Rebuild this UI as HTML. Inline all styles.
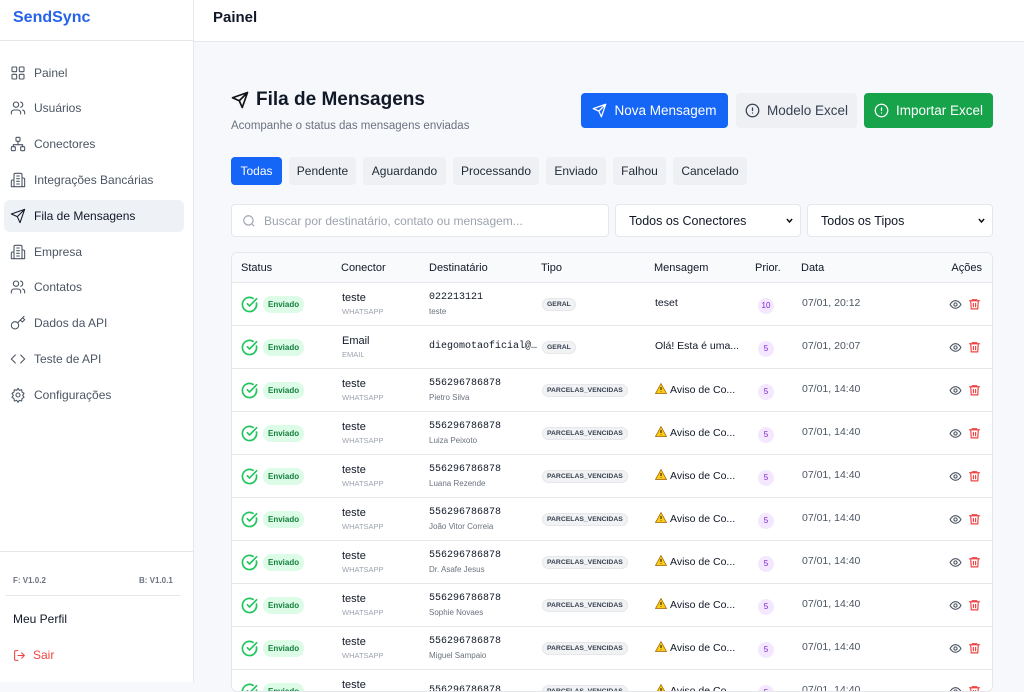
<!DOCTYPE html>
<html><head><meta charset="utf-8"><style>
*{box-sizing:border-box;margin:0;padding:0}
body{width:1024px;height:682px;overflow:hidden;font-family:"Liberation Sans",sans-serif;background:#f6f8fb;position:relative;color:#111827}
.sb{position:absolute;left:0;top:0;width:194px;height:682px;background:#fff;border-right:1px solid #e5e7eb}
.logo{height:41px;border-bottom:1px solid #e5e7eb;padding:9px 13px;font-weight:bold;font-size:16px;color:#2563eb}
.nav{position:absolute;left:4px;width:180px;height:32px;display:flex;align-items:center;padding-left:6px;font-size:12px;color:#4b5563}
.nav svg{width:16px;height:16px;margin-right:8px;fill:none;stroke:#4b5563;stroke-width:1.6;stroke-linecap:round;stroke-linejoin:round}
.nav.act{background:#eef2f7;color:#111827;border-radius:6px}
.nav.act svg{stroke:#111827}
.top{position:absolute;left:194px;top:0;right:0;height:42px;background:#fff;border-bottom:1px solid #e5e7eb;padding:9px 19px;font-weight:bold;font-size:15px}
.abs{position:absolute}
.btn{position:absolute;top:93px;height:35px;border-radius:4px;display:flex;align-items:center;justify-content:center;font-size:13.5px;gap:7px}
.btn svg{width:15px;height:15px;fill:none;stroke-width:2;stroke-linecap:round;stroke-linejoin:round}
.tab{position:absolute;top:157px;height:28px;border-radius:4px;background:#eef0f3;font-size:12px;display:flex;align-items:center;justify-content:center;color:#1f2937}
.inp{position:absolute;top:204px;height:33px;background:#fff;border:1px solid #e5e7eb;border-radius:4px;font-size:12.5px;display:flex;align-items:center}
.card{position:absolute;left:231px;top:252px;width:762px;height:440px;background:#fff;border:1px solid #e5e7eb;border-radius:6px;overflow:hidden}
.th{position:absolute;top:0;height:30px;width:100%;background:#f9fafb;border-bottom:1px solid #e5e7eb;font-size:11px;color:#111827}
.th span{position:absolute;top:9px}
.row{position:absolute;left:0;width:100%;height:43px;border-bottom:1px solid #e5e7eb;font-size:11px}
.row>*{position:absolute}
.chk{left:9px;top:13px;width:17px;height:17px}
.env{left:31px;top:13px;background:#dcfce7;color:#15803d;font-size:8px;font-weight:bold;padding:4px 5px;border-radius:8px}
.c1{left:110px;top:9px;font-size:11px}
.c1s{left:110px;top:24px;font-size:7.5px;color:#9ca3af}
.d1{left:197px;top:9px;font-family:"Liberation Mono",monospace;font-size:10px}
.d1s{left:197px;top:24px;font-size:8px;color:#6b7280}
.tp{left:310px;top:15px;background:#f1f2f4;border:1px solid #e5e7eb;border-radius:8px;font-size:6.8px;font-weight:bold;color:#374151;padding:2px 4px}
.msg{left:423px;top:14px;font-size:10.5px}
.pr{left:526px;top:15px;width:16px;height:16px;border-radius:8px;background:#f3e8ff;color:#7e22ce;font-size:8px;text-align:center;line-height:16px}
.dt{left:570px;top:14px;color:#4b5563;font-size:10.5px}
.eye{left:717px;top:15px;width:13px;height:13px}
.tr{left:736px;top:14px;width:13px;height:14px}
.chev{width:9px;height:9px}
</style></head><body>
<div class="sb">
<div class="logo">SendSync</div>
<div class="nav" style="top:57px"><svg viewBox="0 0 24 24"><rect x="3" y="3" width="7" height="7" rx="1"/><rect x="14" y="3" width="7" height="7" rx="1"/><rect x="14" y="14" width="7" height="7" rx="1"/><rect x="3" y="14" width="7" height="7" rx="1"/></svg>Painel</div>
<div class="nav" style="top:92px"><svg viewBox="0 0 24 24"><circle cx="9" cy="7" r="4"/><path d="M2 21v-2a4 4 0 0 1 4-4h6a4 4 0 0 1 4 4v2M16 3.1a4 4 0 0 1 0 7.8M22 21v-2a4 4 0 0 0-3-3.9"/></svg>Usuários</div>
<div class="nav" style="top:128px"><svg viewBox="0 0 24 24"><rect x="9" y="2" width="6" height="6" rx="1"/><rect x="2" y="16" width="6" height="6" rx="1"/><rect x="16" y="16" width="6" height="6" rx="1"/><path d="M5 16v-3h14v3M12 8v5"/></svg>Conectores</div>
<div class="nav" style="top:164px"><svg viewBox="0 0 24 24"><path d="M6 22V4a2 2 0 0 1 2-2h8a2 2 0 0 1 2 2v18zM6 12H4a2 2 0 0 0-2 2v8h4M18 9h2a2 2 0 0 1 2 2v11h-4M10 6h4M10 10h4M10 14h4M10 18h4"/></svg>Integrações Bancárias</div>
<div class="nav act" style="top:200px"><svg viewBox="0 0 24 24"><path d="M22 2 11 13M22 2l-7 20-4-9-9-4z"/></svg>Fila de Mensagens</div>
<div class="nav" style="top:236px"><svg viewBox="0 0 24 24"><path d="M6 22V4a2 2 0 0 1 2-2h8a2 2 0 0 1 2 2v18zM6 12H4a2 2 0 0 0-2 2v8h4M18 9h2a2 2 0 0 1 2 2v11h-4M10 6h4M10 10h4M10 14h4M10 18h4"/></svg>Empresa</div>
<div class="nav" style="top:271px"><svg viewBox="0 0 24 24"><circle cx="9" cy="7" r="4"/><path d="M2 21v-2a4 4 0 0 1 4-4h6a4 4 0 0 1 4 4v2M16 3.1a4 4 0 0 1 0 7.8M22 21v-2a4 4 0 0 0-3-3.9"/></svg>Contatos</div>
<div class="nav" style="top:307px"><svg viewBox="0 0 24 24"><circle cx="7.5" cy="15.5" r="5.5"/><path d="m21 2-9.6 9.6M15.5 7.5l3 3L22 7l-3-3"/></svg>Dados da API</div>
<div class="nav" style="top:343px"><svg viewBox="0 0 24 24"><path d="m16 18 6-6-6-6M8 6l-6 6 6 6"/></svg>Teste de API</div>
<div class="nav" style="top:379px"><svg viewBox="0 0 24 24"><circle cx="12" cy="12" r="3"/><path d="M12 2l2 3 3.5-1 .5 3.5 3 2-2 3 2 3-3 2-.5 3.5-3.5-1-2 3-2-3-3.5 1L6 17.5l-3-2 2-3-2-3 3-2 .5-3.5 3.5 1z"/></svg>Configurações</div>
<div class="abs" style="top:551px;left:0;width:193px;border-top:1px solid #e5e7eb"></div>
<div class="abs" style="top:576px;left:13px;font-size:8px;font-weight:bold;color:#6b7280">F: V1.0.2</div>
<div class="abs" style="top:576px;left:139px;font-size:8px;font-weight:bold;color:#6b7280">B: V1.0.1</div>
<div class="abs" style="top:595px;left:6px;width:174px;border-top:1px solid #e5e7eb"></div>
<div class="abs" style="top:612px;left:13px;font-size:12px">Meu Perfil</div>
<div class="abs" style="top:648px;left:13px;font-size:12px;color:#ef4444;display:flex;align-items:center;gap:7px"><svg width="13" height="13" viewBox="0 0 24 24" fill="none" stroke="#ef4444" stroke-width="2" stroke-linecap="round" stroke-linejoin="round"><path d="M9 21H5a2 2 0 0 1-2-2V5a2 2 0 0 1 2-2h4M16 17l5-5-5-5M21 12H9"/></svg>Sair</div>
</div>
<div class="top">Painel</div>

<div class="abs" style="left:231px;top:89px;display:flex;align-items:center;gap:7px;font-size:19px;font-weight:bold"><svg width="18" height="18" viewBox="0 0 24 24" fill="none" stroke="#111" stroke-width="2.2" stroke-linecap="round" stroke-linejoin="round"><path d="M22 2 11 13M22 2l-7 20-4-9-9-4z"/></svg>Fila de Mensagens</div>
<div class="abs" style="left:231px;top:120px;font-size:11.5px;color:#6b7280">Acompanhe o status das mensagens enviadas</div>

<div class="btn" style="left:581px;width:147px;background:#1565f6;color:#fff"><svg viewBox="0 0 24 24" stroke="#fff"><path d="M22 2 11 13M22 2l-7 20-4-9-9-4z"/></svg>Nova Mensagem</div>
<div class="btn" style="left:736px;width:121px;background:#eef0f3;color:#374151"><svg viewBox="0 0 24 24" stroke="#374151"><circle cx="12" cy="12" r="10"/><path d="M12 8v4M12 16h.01"/></svg>Modelo Excel</div>
<div class="btn" style="left:864px;width:129px;background:#16a34a;color:#fff"><svg viewBox="0 0 24 24" stroke="#fff"><circle cx="12" cy="12" r="10"/><path d="M12 8v4M12 16h.01"/></svg>Importar Excel</div>

<div class="tab" style="left:231px;width:51px;background:#1565f6;color:#fff">Todas</div>
<div class="tab" style="left:289px;width:67px">Pendente</div>
<div class="tab" style="left:363px;width:83px">Aguardando</div>
<div class="tab" style="left:453px;width:86px">Processando</div>
<div class="tab" style="left:546px;width:60px">Enviado</div>
<div class="tab" style="left:613px;width:53px">Falhou</div>
<div class="tab" style="left:673px;width:74px">Cancelado</div>

<div class="inp" style="left:231px;width:378px;color:#9ca3af;padding-left:10px;font-size:12px"><svg width="14" height="14" viewBox="0 0 24 24" fill="none" stroke="#9ca3af" stroke-width="2" style="margin-right:8px"><circle cx="11" cy="11" r="8"/><path d="m21 21-4.3-4.3"/></svg>Buscar por destinatário, contato ou mensagem...</div>
<div class="inp" style="left:615px;width:186px;padding-left:13px;justify-content:space-between;padding-right:6px">Todos os Conectores<svg class="chev" viewBox="0 0 24 24" fill="none" stroke="#111" stroke-width="4"><path d="m5 8 7 8 7-8"/></svg></div>
<div class="inp" style="left:807px;width:186px;padding-left:13px;justify-content:space-between;padding-right:6px">Todos os Tipos<svg class="chev" viewBox="0 0 24 24" fill="none" stroke="#111" stroke-width="4"><path d="m5 8 7 8 7-8"/></svg></div>

<div class="card">
<div class="th"><span style="left:9px">Status</span><span style="left:109px">Conector</span><span style="left:197px">Destinatário</span><span style="left:309px">Tipo</span><span style="left:422px">Mensagem</span><span style="left:523px">Prior.</span><span style="left:569px">Data</span><span style="right:10px">Ações</span></div>
<div id="rows"></div>
</div>
<script>
var d=[["teste","WHATSAPP","022213121","teste","GERAL","teset","10","07/01, 20:12"],
["Email","EMAIL","diegomotaoficial@…","","GERAL","Olá! Esta é uma...","5","07/01, 20:07"],
["teste","WHATSAPP","556296786878","Pietro Silva","PARCELAS_VENCIDAS","!","5","07/01, 14:40"],
["teste","WHATSAPP","556296786878","Luiza Peixoto","PARCELAS_VENCIDAS","!","5","07/01, 14:40"],
["teste","WHATSAPP","556296786878","Luana Rezende","PARCELAS_VENCIDAS","!","5","07/01, 14:40"],
["teste","WHATSAPP","556296786878","João Vitor Correia","PARCELAS_VENCIDAS","!","5","07/01, 14:40"],
["teste","WHATSAPP","556296786878","Dr. Asafe Jesus","PARCELAS_VENCIDAS","!","5","07/01, 14:40"],
["teste","WHATSAPP","556296786878","Sophie Novaes","PARCELAS_VENCIDAS","!","5","07/01, 14:40"],
["teste","WHATSAPP","556296786878","Miguel Sampaio","PARCELAS_VENCIDAS","!","5","07/01, 14:40"],
["teste","WHATSAPP","556296786878","","PARCELAS_VENCIDAS","!","5","07/01, 14:40"]];
var warn='<svg width="12" height="11" viewBox="0 0 24 22" style="vertical-align:-1px;margin-right:3px"><path d="M12 1 23 21H1z" fill="#facc15" stroke="#a16207" stroke-width="1.5"/><path d="M12 8v6M12 17v1" stroke="#111" stroke-width="2"/></svg>';
var h="";d.forEach(function(r,i){var m=r[5]=="!"?warn+'Aviso de Co...':r[5];
h+='<div class="row" style="top:'+(30+i*43)+'px"><svg class="chk" viewBox="0 0 24 24" fill="none" stroke="#22c55e" stroke-width="2.4" stroke-linecap="round"><path d="M21.8 10A10 10 0 1 1 17 3.3"/><path d="m9 11 3 3L22 4"/></svg><span class="env">Enviado</span><span class="c1">'+r[0]+'</span><span class="c1s">'+r[1]+'</span><span class="d1"'+(r[3]?'':' style="top:15px"')+'>'+r[2]+'</span><span class="d1s">'+r[3]+'</span><span class="tp">'+r[4]+'</span><span class="msg">'+m+'</span><span class="pr">'+r[6]+'</span><span class="dt">'+r[7]+'</span><svg class="eye" viewBox="0 0 24 24" fill="none" stroke="#4b5563" stroke-width="2"><path d="M2 12s3.5-7 10-7 10 7 10 7-3.5 7-10 7S2 12 2 12z"/><circle cx="12" cy="12" r="3"/></svg><svg class="tr" viewBox="0 0 24 24" fill="none" stroke="#ef4444" stroke-width="2.2" stroke-linecap="round"><path d="M3 6h18M8 6V4h8v2M5 6l1 15h12l1-15M10 11v6M14 11v6"/></svg></div>';});
document.getElementById("rows").innerHTML=h;
</script>
</body></html>
